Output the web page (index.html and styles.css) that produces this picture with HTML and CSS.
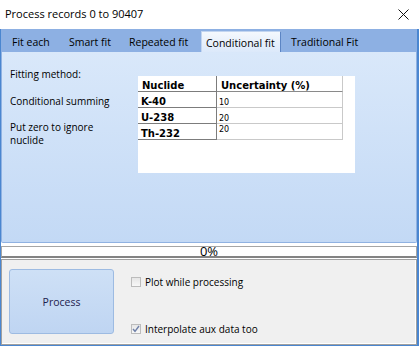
FILE: index.html
```html
<!DOCTYPE html>
<html lang="en">
<head>
  <meta charset="UTF-8" />
  <title>Process records</title>
  <link rel="stylesheet" href="styles.css">
</head>
<body>
  <div class="titlebar">
    <span class="title">Process records 0 to 90407</span>
    <svg class="close" width="11" height="11" viewBox="0 0 11 11">
      <path d="M0.5 0.5 L10.5 10.5 M10.5 0.5 L0.5 10.5" stroke="#111" stroke-width="1" fill="none" />
    </svg>
  </div>

  <div class="frame">
    <!-- Tabs -->
    <div class="tabs">
      <div class="tab t1">Fit each</div>
      <div class="tab t2">Smart fit</div>
      <div class="tab t3">Repeated fit</div>
      <div class="tab t4 active">Conditional fit</div>
      <div class="tab t5">Traditional Fit</div>
    </div>

    <div class="panel">
      <div class="labels">
        <div class="label">Fitting method:</div>
        <div class="label">Conditional summing</div>
        <div class="label narrow">Put zero to ignore nuclide</div>
      </div>
      <div class="grid-box">
        <div class="grid">
          <div class="cell head key">Nuclide</div>
          <div class="cell head">Uncertainty (%)</div>
          <div class="cell key">K-40</div>
          <div class="cell val">10</div>
          <div class="cell key">U-238</div>
          <div class="cell val">20</div>
          <div class="cell key">Th-232</div>
          <div class="cell val editing">20</div>
        </div>
      </div>
    </div>

    <div class="progress"><span>0%</span></div>

    <div class="bottom">
      <button class="process">Process</button>
      <div class="options">
        <label class="check"><span class="box"></span>Plot while processing</label>
        <label class="check">
          <span class="box">
            <svg width="8" height="8" viewBox="0 0 8 8">
              <path d="M1 4 L3 6.3 L7 1" stroke="#6f80a8" stroke-width="1.4" fill="none" />
            </svg>
          </span>Interpolate aux data too
        </label>
      </div>
    </div>
  </div>
</body>
</html>
```

FILE: styles.css
```css
:root {
  --accent: #4a86d0;
  --strip: #8db0e3;
  --pane-top: #d9e8fa;
  --pane-bottom: #c3d9f5;
}

body {
  margin: 0;
  width: 419px;
  height: 346px;
  overflow: hidden;
  font-family: "Open Sans", "Noto Sans", sans-serif;
  font-size: 10px;
  color: #000;
  background: #fff;
}

.titlebar {
  height: 29px;
  box-sizing: border-box;
  display: flex;
  align-items: center;
  justify-content: space-between;
  padding: 0 10px 3px 5px;
  font-size: 11px;
}

.close {
  display: block;
  margin-top: 3px;
}

.frame {
  height: 317px;
  box-sizing: border-box;
  border-left: 1px solid var(--accent);
  border-right: 2px solid var(--accent);
  border-bottom: 1px solid var(--accent);
  display: flex;
  flex-direction: column;
}

/* Tab strip */
.tabs {
  height: 23px;
  flex: none;
  display: flex;
  align-items: flex-end;
  padding-left: 6px;
  background: var(--strip);
  font-size: 10.5px;
}

.tab {
  height: 21px;
  box-sizing: border-box;
  padding: 2px 0 0 5px;
  line-height: 18px;
  white-space: nowrap;
}

.t1 { width: 57px; }
.t2 { width: 60px; }
.t3 { width: 77px; }
.t4 { width: 80px; margin-right: 5px; }

.tab.active {
  padding-left: 4px;
  border: 1px solid #c2d5f0;
  border-right-color: #5c85c4;
  border-bottom: none;
  background: linear-gradient(#f4f8fd, #dce9fa);
}

.panel {
  height: 191px;
  flex: none;
  box-sizing: border-box;
  display: flex;
  padding: 16px 0 0 8px;
  border: 1px solid #90b2e2;
  border-top: none;
  border-radius: 0 0 2px 2px;
  background: linear-gradient(var(--pane-top), var(--pane-bottom));
}

.labels {
  width: 128px;
  flex: none;
  line-height: 13px;
}

.label {
  margin-bottom: 13.5px;
}

.label.narrow {
  width: 96px;
}

/* Nuclide grid */
.grid-box {
  margin-top: 8px;
  width: 217px;
  height: 97px;
  background: #fff;
}

.grid {
  display: grid;
  grid-template-columns: 79px 126px;
  grid-auto-rows: 16px;
  font-family: "DejaVu Sans", sans-serif;
}

.cell {
  box-sizing: border-box;
  overflow: hidden;
  white-space: nowrap;
  border-bottom: 1px solid #c9c9c9;
  border-right: 1px solid #c9c9c9;
}

.cell.head,
.cell.key {
  padding: 4px 0 0 3px;
  font-size: 10px;
  font-weight: bold;
  line-height: 12px;
}

.cell.head {
  border-bottom-color: #8a8a8a;
  padding-left: 4px;
}

.cell.key {
  border-right-color: #7c7c7c;
  border-bottom-color: #7c7c7c;
}

.cell.val {
  padding: 6px 0 0 2px;
  font-size: 8px;
  line-height: 10px;
}

.cell.val.editing {
  padding-top: 1px;
}

.progress {
  height: 12px;
  flex: none;
  box-sizing: border-box;
  margin-top: 3px;
  border: 1px solid #a6a6a6;
  border-bottom: 2px solid #838383;
  background: #fff;
  text-align: center;
  font-size: 13px;
  line-height: 9px;
}

/* Bottom area */
.bottom {
  flex: 1;
  margin-top: 1px;
  display: flex;
  align-items: flex-start;
  padding: 9px 0 0 7px;
  border: 1px solid #a0a0a0;
  box-shadow: inset -1px -1px 0 #fff;
  background: #f0f0f0;
}

.process {
  width: 105px;
  height: 65px;
  margin: 0;
  border: 1px solid #9dbbe2;
  border-radius: 3px;
  background: linear-gradient(#cee0f6, #bfd5f2);
  font-family: inherit;
  font-size: 10.5px;
  color: #1d1d4e;
}

.options {
  margin-left: 17px;
  padding-top: 5px;
  display: flex;
  flex-direction: column;
  gap: 32px;
}

.check {
  display: flex;
  align-items: center;
  height: 15px;
  white-space: nowrap;
}

.box {
  width: 10px;
  height: 10px;
  box-sizing: border-box;
  margin-right: 4px;
  display: flex;
  align-items: center;
  justify-content: center;
  border: 1px solid #bcbcbc;
  background: linear-gradient(#e6e6e6, #f8f8f8);
}

.box svg {
  display: block;
}
```
